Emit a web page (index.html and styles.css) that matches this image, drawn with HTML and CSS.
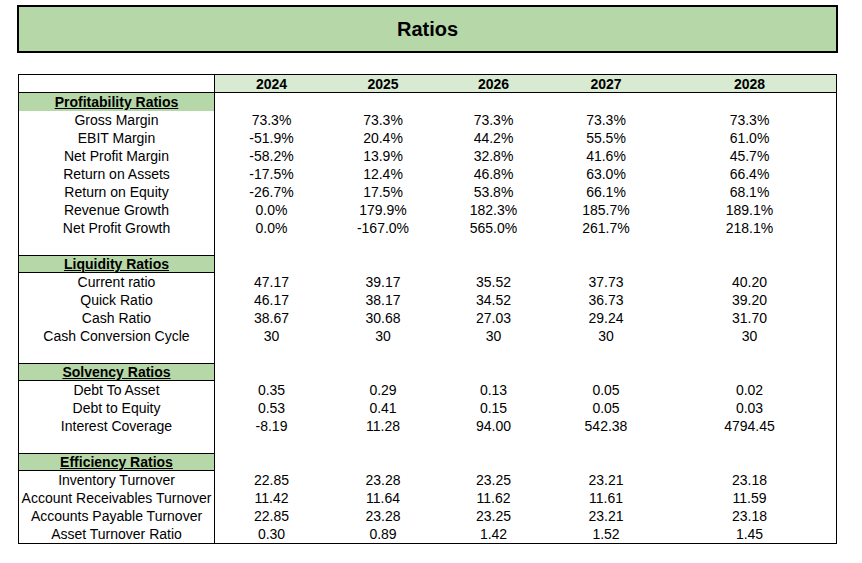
FILE: index.html
```html
<!DOCTYPE html>
<html>
<head>
<meta charset="utf-8">
<link rel="stylesheet" href="styles.css">
</head>
<body>
<div class="title">Ratios</div>
<table class="ratios">
<colgroup>
<col class="c1"><col class="c2"><col class="c3"><col class="c4"><col class="c5"><col class="c6">
</colgroup>
<tr class="head"><td class="lbl"></td><td>2024</td><td>2025</td><td>2026</td><td>2027</td><td>2028</td></tr>
<tr><td class="lbl sec first">Profitability Ratios</td><td></td><td></td><td></td><td></td><td></td></tr>
<tr><td class="lbl">Gross Margin</td><td>73.3%</td><td>73.3%</td><td>73.3%</td><td>73.3%</td><td>73.3%</td></tr>
<tr><td class="lbl">EBIT Margin</td><td>-51.9%</td><td>20.4%</td><td>44.2%</td><td>55.5%</td><td>61.0%</td></tr>
<tr><td class="lbl">Net Profit Margin</td><td>-58.2%</td><td>13.9%</td><td>32.8%</td><td>41.6%</td><td>45.7%</td></tr>
<tr><td class="lbl">Return on Assets</td><td>-17.5%</td><td>12.4%</td><td>46.8%</td><td>63.0%</td><td>66.4%</td></tr>
<tr><td class="lbl">Return on Equity</td><td>-26.7%</td><td>17.5%</td><td>53.8%</td><td>66.1%</td><td>68.1%</td></tr>
<tr><td class="lbl">Revenue Growth</td><td>0.0%</td><td>179.9%</td><td>182.3%</td><td>185.7%</td><td>189.1%</td></tr>
<tr><td class="lbl">Net Profit Growth</td><td>0.0%</td><td>-167.0%</td><td>565.0%</td><td>261.7%</td><td>218.1%</td></tr>
<tr><td class="lbl"></td><td></td><td></td><td></td><td></td><td></td></tr>
<tr><td class="lbl sec">Liquidity Ratios</td><td></td><td></td><td></td><td></td><td></td></tr>
<tr><td class="lbl">Current ratio</td><td>47.17</td><td>39.17</td><td>35.52</td><td>37.73</td><td>40.20</td></tr>
<tr><td class="lbl">Quick Ratio</td><td>46.17</td><td>38.17</td><td>34.52</td><td>36.73</td><td>39.20</td></tr>
<tr><td class="lbl">Cash Ratio</td><td>38.67</td><td>30.68</td><td>27.03</td><td>29.24</td><td>31.70</td></tr>
<tr><td class="lbl">Cash Conversion Cycle</td><td>30</td><td>30</td><td>30</td><td>30</td><td>30</td></tr>
<tr><td class="lbl"></td><td></td><td></td><td></td><td></td><td></td></tr>
<tr><td class="lbl sec">Solvency Ratios</td><td></td><td></td><td></td><td></td><td></td></tr>
<tr><td class="lbl">Debt To Asset</td><td>0.35</td><td>0.29</td><td>0.13</td><td>0.05</td><td>0.02</td></tr>
<tr><td class="lbl">Debt to Equity</td><td>0.53</td><td>0.41</td><td>0.15</td><td>0.05</td><td>0.03</td></tr>
<tr><td class="lbl">Interest Coverage</td><td>-8.19</td><td>11.28</td><td>94.00</td><td>542.38</td><td>4794.45</td></tr>
<tr><td class="lbl"></td><td></td><td></td><td></td><td></td><td></td></tr>
<tr><td class="lbl sec">Efficiency Ratios</td><td></td><td></td><td></td><td></td><td></td></tr>
<tr><td class="lbl">Inventory Turnover</td><td>22.85</td><td>23.28</td><td>23.25</td><td>23.21</td><td>23.18</td></tr>
<tr><td class="lbl">Account Receivables Turnover</td><td>11.42</td><td>11.64</td><td>11.62</td><td>11.61</td><td>11.59</td></tr>
<tr><td class="lbl">Accounts Payable Turnover</td><td>22.85</td><td>23.28</td><td>23.25</td><td>23.21</td><td>23.18</td></tr>
<tr><td class="lbl">Asset Turnover Ratio</td><td>0.30</td><td>0.89</td><td>1.42</td><td>1.52</td><td>1.45</td></tr>
</table>
</body>
</html>
```

FILE: styles.css
```css
html, body {
  margin: 0;
  padding: 0;
  background: #ffffff;
}
body {
  font-family: "Liberation Sans", Arial, sans-serif;
  color: #000000;
  padding-top: 5px;
}
.title {
  box-sizing: border-box;
  margin-left: 17px;
  width: 821px;
  height: 48px;
  border: 2px solid #000000;
  background: #b6d7a8;
  font-weight: bold;
  font-size: 20px;
  display: flex;
  align-items: center;
  justify-content: center;
  padding-top: 1px;
}
.ratios {
  margin-top: 21px;
  margin-left: 18px;
  width: 819px;
  table-layout: fixed;
  border-collapse: separate;
  border-spacing: 0;
  border: 1px solid #000000;
  font-size: 14px;
}
.c1 { width: 196px; }
.c2 { width: 113px; }
.c3 { width: 110px; }
.c4 { width: 111px; }
.c5 { width: 114px; }
.c6 { width: 173px; }
.ratios tr {
  height: 18px;
}
.ratios td {
  padding: 0;
  line-height: 16px;
  text-align: center;
  white-space: nowrap;
  overflow: hidden;
  vertical-align: middle;
}
.ratios td.lbl {
  border-right: 1px solid #000000;
}
.head td {
  border-bottom: 1px solid #000000;
  background: #d9ead3;
  font-weight: bold;
}
.head td.lbl {
  background: #ffffff;
}
.ratios td.sec {
  background: #b6d7a8;
  font-weight: bold;
  text-decoration: underline;
  border-top: 1px solid #000000;
  border-bottom: 1px solid #000000;
}
.ratios td.sec.first {
  border-top: 0;
  border-bottom: 0;
}
```
